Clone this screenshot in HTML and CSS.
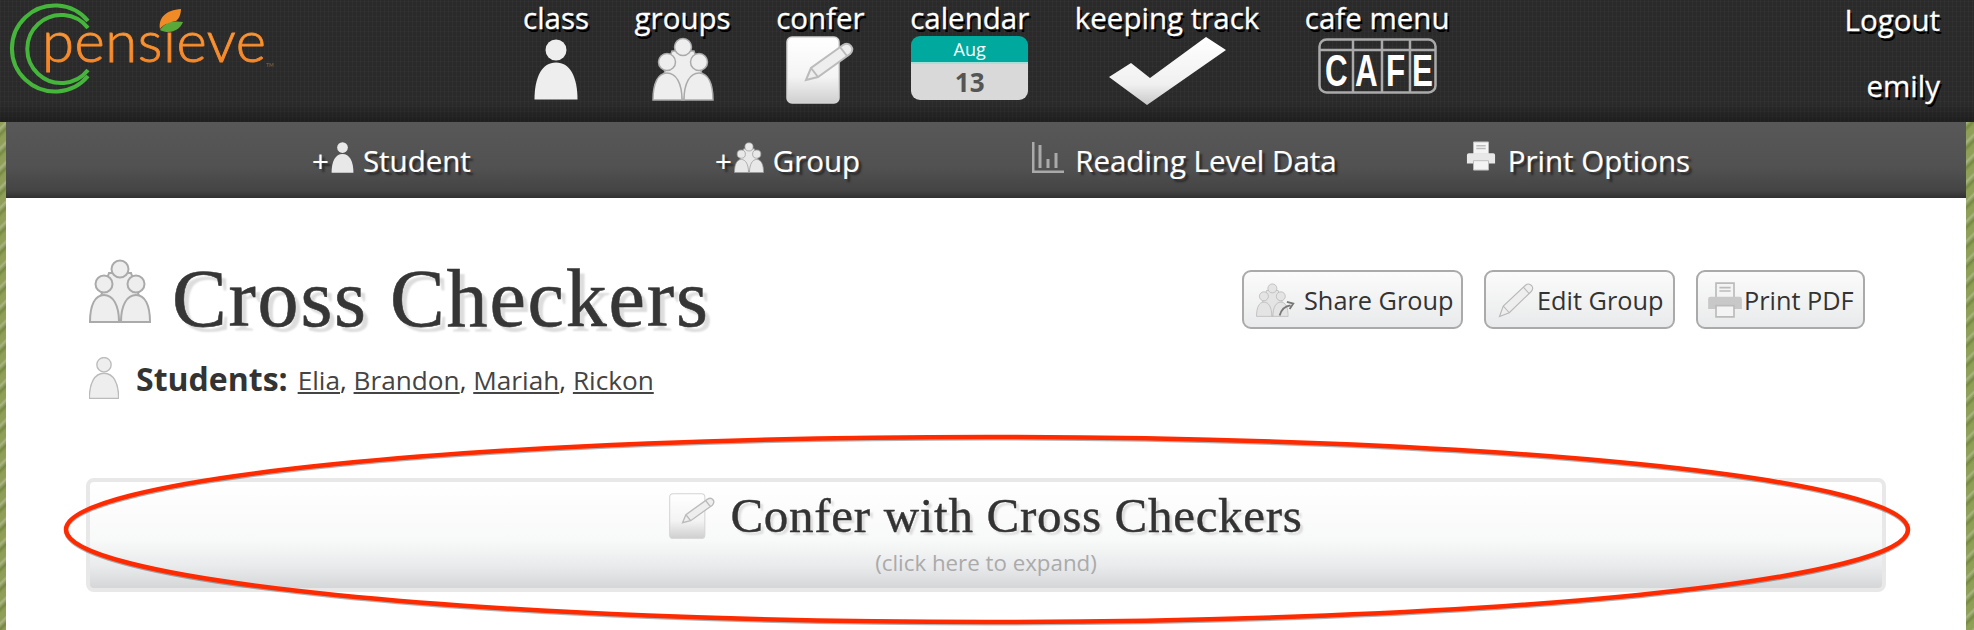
FILE: index.html
```html
<html>
    <head>
        <title>Pensieve - Cross Checkers</title>
        <link rel="stylesheet" href="styles.css">
    </head>
    <body>
        <svg class="defs">
            <defs>
                <symbol id="person" viewBox="0 0 44 61">
                    <circle cx="22" cy="11" r="10.5"/>
                    <path d="M0.5 60.5 C0.5 38 8 23.5 22 23.5 C36 23.5 43.5 38 43.5 60.5 Z"/>
                </symbol>
                <symbol id="group" viewBox="0 0 62 64">
                    <path d="M20 14 H42 L50 37 Q35 42 32 63 H30 Q27 42 12 37 Z"/>
                    <circle cx="31" cy="10" r="8.5"/>
                    <circle cx="15" cy="25" r="8.5"/>
                    <circle cx="47" cy="25" r="8.5"/>
                    <path d="M1 63 C1 46 6 36 15 36 C24 36 30 46 30 63 Z"/>
                    <path d="M32 63 C32 46 38 36 47 36 C56 36 61 46 61 63 Z"/>
                </symbol>
                <symbol id="printer" viewBox="0 0 32 32">
                    <path d="M8 1 H24 V14 H8 Z" fill="#f4f4f4" stroke="#bbb"/>
                    <path d="M11 5 H21 M11 8 H21" stroke="#bbb" stroke-width="1.500"/>
                    <path d="M3 13 H29 Q31 13 31 15 V24 H1 V15 Q1 13 3 13 Z"/>
                    <path d="M8 21 H24 V31 H8 Z" fill="#f4f4f4" stroke="#bbb"/>
                </symbol>
                <symbol id="pencil" viewBox="0 0 48 48">
                    <path d="M2 46 L7 32 L37 4 Q41 1 45 5 Q48 9 44 13 L15 41 Z M7 32 L15 41 M34 7 L42 16"/>
                </symbol>
                <symbol id="note" viewBox="0 0 68 68">
                    <rect x="1" y="1" width="52" height="66" rx="5" fill="url(#noteFill)" stroke="#d4d4d4" stroke-width="1.500"/>
                    <path class="note-pen" d="M20 44 L25 32 L57 9 Q62 6 65 10 Q68 14 64 18 L32 41 Z M25 32 L32 41 M54 11 L61 20"/>
                </symbol>
                <linearGradient id="noteFill" x1="0" y1="0" x2="0" y2="1">
                    <stop offset="0" stop-color="#fff"/>
                    <stop offset="0.6" stop-color="#f4f4f4"/>
                    <stop offset="1" stop-color="#cfcfcf"/>
                </linearGradient>
                <linearGradient id="checkFill" x1="0" y1="0" x2="0" y2="1">
                    <stop offset="0" stop-color="#fff"/>
                    <stop offset="0.7" stop-color="#f0f0f0"/>
                    <stop offset="1" stop-color="#c8c8c8"/>
                </linearGradient>
                <linearGradient id="logoFill" x1="0" y1="0" x2="0" y2="1">
                    <stop offset="0" stop-color="#ffb04a"/>
                    <stop offset="1" stop-color="#f47c20"/>
                </linearGradient>
            </defs>
        </svg>

        <div id="header">
            <svg class="logo" viewBox="0 0 280 98">
                <path class="ring" d="M88 21 A43 43 0 1 0 88 76"/>
                <path class="ring" d="M88 28 A34 34 0 1 0 88 70"/>
                <text class="logo-text" x="42" y="62" textLength="224" lengthAdjust="spacing">pensieve</text>
                <text class="logo-tm" x="266" y="67">TM</text>
                <path d="M160 29 C158 18 166 10 181 9 C181 14 179 19 176 21 C170 22 164 24 160 29 Z" fill="#ef8a26"/>
                <path d="M160 30 C164 23 172 20 183 22 C180 30 170 35 160 30 Z" fill="#5aa83a"/>
            </svg>

            <div class="nav">
                <a class="nav-item">class
                    <svg class="nav-icon person-icon"><use href="#person"/></svg>
                </a>
                <a class="nav-item">groups
                    <svg class="nav-icon group-icon"><use href="#group"/></svg>
                </a>
                <a class="nav-item">confer
                    <svg class="nav-icon note-icon"><use href="#note"/></svg>
                </a>
                <a class="nav-item">calendar
                    <div class="cal">
                        <div class="cal-month">Aug</div>
                        <div class="cal-day">13</div>
                    </div>
                </a>
                <a class="nav-item">keeping track
                    <svg class="nav-icon check-icon" viewBox="0 0 117 68"><path d="M0 40 L22 26 L41 41 L97 0 L117 13 L38 68 Z" fill="url(#checkFill)"/></svg>
                </a>
                <a class="nav-item">cafe menu
                    <svg class="nav-icon cafe-icon" viewBox="0 0 119 56">
                        <rect x="1.500" y="1.500" width="116" height="53" rx="7"/>
                        <path d="M1.500 12 H117.500 M35 1.500 V54.500 M64 1.500 V54.500 M92 1.500 V54.500"/>
                        <text transform="translate(7 48) scale(0.95 1.33)">C</text>
                        <text transform="translate(37 48) scale(0.95 1.33)">A</text>
                        <text transform="translate(68 48) scale(0.95 1.33)">F</text>
                        <text transform="translate(94 48) scale(0.95 1.33)">E</text>
                    </svg>
                </a>
            </div>

            <div class="user">
                <a>Logout</a>
                <a>emily</a>
            </div>
        </div>

        <div id="page">
            <div id="subnav">
                <a class="sub-item sub-student">+<svg class="sub-icon person-small"><use href="#person"/></svg> Student</a>
                <a class="sub-item sub-group">+<svg class="sub-icon group-small"><use href="#group"/></svg> Group</a>
                <a class="sub-item sub-data">
                    <svg class="sub-icon data-small" viewBox="0 0 32 32"><path d="M1 1 V31 H32 M8 4 V27 M16 18 V27 M24 12 V27" /></svg> Reading Level Data</a>
                <a class="sub-item sub-print"><svg class="sub-icon print-small"><use href="#printer"/></svg> Print Options</a>
            </div>

            <div id="content">
                <div class="title-row">
                    <div class="title-left">
                        <svg class="title-icon"><use href="#group"/></svg>
                        <h1>Cross Checkers</h1>
                    </div>
                    <div class="actions">
                        <button class="action share-btn">
                            <svg class="action-icon" viewBox="0 0 44 46">
                                <use href="#group" width="36" height="44" y="1"/>
                                <path class="share-arrow" d="M26 40 Q29 30 38 29 M34 25 L41 27 L37 33"/>
                            </svg>Share Group
                        </button>
                        <button class="action edit-btn">
                            <svg class="action-icon"><use href="#pencil"/></svg>Edit Group
                        </button>
                        <button class="action print-btn">
                            <svg class="action-icon"><use href="#printer"/></svg>Print PDF
                        </button>
                    </div>
                </div>

                <div class="students">
                    <svg class="students-icon"><use href="#person"/></svg>
                    <b>Students:</b>
                    <span class="names"><a>Elia</a>, <a>Brandon</a>, <a>Mariah</a>, <a>Rickon</a></span>
                </div>

                <div class="confer">
                    <div class="confer-head">
                        <svg class="confer-icon"><use href="#note"/></svg>
                        <h2>Confer with Cross Checkers</h2>
                    </div>
                    <p>(click here to expand)</p>
                </div>
            </div>
        </div>

        <!-- hand drawn red circle on top of the screenshot -->
        <svg class="annotation" viewBox="0 0 1974 630">
            <ellipse class="mark-shadow" cx="987" cy="531" rx="921" ry="92.500"/>
            <ellipse class="mark" cx="987" cy="529.500" rx="921" ry="92.500"/>
        </svg>
    </body>
</html>
```

FILE: styles.css
```css
html, body {
    height: 630px;
    overflow: hidden;
}
body {
    margin: 0;
    position: relative;
    font-family: "Open Sans", "Noto Sans", sans-serif;
    background-color: #8a9a55;
    background-image: repeating-linear-gradient(135deg, #8f9f58 0, #8f9f58 5px, #a9b582 7px, #76883f 11px, #8f9f58 14px);
}
a {
    color: inherit;
}
.defs {
    position: absolute;
    width: 0;
    height: 0;
}

/* top bar */
#header {
    height: 122px;
    box-sizing: border-box;
    display: flex;
    align-items: flex-start;
    color: #fff;
    background-color: #2a2a2a;
    background-image:
        linear-gradient(to bottom, rgba(0,0,0,0) 85%, rgba(0,0,0,0.3) 100%),
        repeating-linear-gradient(90deg, rgba(255,255,255,0.025) 0, rgba(255,255,255,0.025) 1px, rgba(0,0,0,0) 1px, rgba(0,0,0,0) 4px),
        repeating-linear-gradient(0deg, rgba(255,255,255,0.02) 0, rgba(255,255,255,0.02) 1px, rgba(0,0,0,0) 1px, rgba(0,0,0,0) 5px);
    text-shadow: 2px 3px 0 #000;
}
.logo {
    width: 280px;
    height: 98px;
    flex: none;
}
.ring {
    fill: none;
    stroke: #45b53c;
    stroke-width: 4;
}
.logo-text {
    font-family: Lato, sans-serif;
    font-weight: 300;
    font-size: 58px;
    fill: url(#logoFill);
    stroke: #f58a2a;
    stroke-width: 0.9;
    text-shadow: none;
}
.logo-tm {
    font-family: Lato, sans-serif;
    font-size: 5px;
    fill: #8a6a3a;
    text-shadow: none;
}
.nav {
    display: flex;
    gap: 45.500px;
    margin-left: 243px;
}
.nav-item {
    display: flex;
    flex-direction: column;
    align-items: center;
    font-size: 29.500px;
    line-height: 36px;
    white-space: nowrap;
    -webkit-text-stroke: 0.3px #fff;
}
.nav-icon {
    display: block;
    fill: #eee;
}
.person-icon {
    width: 44px;
    height: 61px;
    margin-top: 3px;
}
.group-icon {
    width: 62px;
    height: 64px;
    margin-top: 1px;
    stroke: #aaa;
    stroke-width: 1.500;
}
.note-icon {
    width: 68px;
    height: 68px;
}
.note-pen {
    fill: #eee;
    stroke: #bbb;
    stroke-width: 2;
}
.cal {
    width: 117px;
    height: 64px;
    border-radius: 9px;
    overflow: hidden;
    text-shadow: none;
    text-align: center;
    -webkit-text-stroke: 0;
}
.cal-month {
    height: 26px;
    line-height: 26px;
    font-size: 18px;
    color: #fff;
    background-color: #00a99d;
    border-bottom: 2px solid #a5e0d8;
}
.cal-day {
    height: 36px;
    line-height: 37px;
    font-size: 26px;
    font-weight: 700;
    color: #555;
    background-color: #d9d9d9;
}
.check-icon {
    width: 117px;
    height: 68px;
    margin-top: 1px;
}
.cafe-icon {
    width: 119px;
    height: 56px;
    margin-top: 2px;
    fill: none;
    stroke: #aaa;
    stroke-width: 2.500;
}
.cafe-icon text {
    font-family: "Liberation Sans", sans-serif;
    font-weight: 700;
    font-size: 33px;
    fill: #fff;
    stroke: none;
    text-shadow: none;
    -webkit-text-stroke: 0;
}
.user {
    margin-left: auto;
    padding-right: 34px;
    display: flex;
    flex-direction: column;
    align-items: flex-end;
    gap: 30px;
    font-size: 29.500px;
    line-height: 36px;
    padding-top: 2px;
    -webkit-text-stroke: 0.3px #fff;
}

/* second bar and page */
#page {
    margin: 0 8px 0 6px;
    background-color: #fff;
    height: 508px;
}
#subnav {
    height: 76px;
    display: flex;
    align-items: center;
    color: #fff;
    background-image: linear-gradient(to bottom, #585858 0, #515151 60%, #444 90%, #303030 100%);
    text-shadow: 3px 3px 2px #2a2a2a;
    font-size: 29.500px;
    -webkit-text-stroke: 0.2px #fff;
}
.sub-item {
    display: flex;
    align-items: center;
    gap: 8px;
    white-space: nowrap;
}
.sub-student {
    margin-left: 306px;
}
.sub-group {
    margin-left: 244px;
}
.sub-data {
    margin-left: 172px;
    gap: 11px;
}
.sub-print {
    margin-left: 129px;
}
.sub-icon {
    flex: none;
    fill: #e8e8e8;
}
.person-small {
    width: 25px;
    height: 31px;
    margin-left: -7px;
    margin-top: -6px;
}
.group-small {
    width: 32px;
    height: 31px;
    margin-left: -7px;
    margin-top: -6px;
    stroke: #999;
    stroke-width: 1.500;
}
.data-small {
    width: 32px;
    height: 32px;
    margin-top: -6px;
    fill: none;
    stroke: #aaa;
    stroke-width: 3;
}
.print-small {
    width: 30px;
    height: 32px;
    margin-top: -8px;
    margin-right: 4px;
}
#content {
    padding: 0 80px;
    color: #363636;
}
.title-row {
    display: flex;
    justify-content: space-between;
    align-items: flex-start;
    height: 159px;
}
.title-left {
    display: flex;
    align-items: flex-start;
    gap: 21px;
    padding-top: 61px;
}
.title-icon {
    width: 62px;
    height: 64px;
    margin-left: 3px;
    fill: #eee;
    stroke: #aaa;
    stroke-width: 2;
}
h1 {
    margin: 0;
    font-family: "Liberation Serif", serif;
    font-weight: 400;
    font-size: 82px;
    line-height: 80px;
    text-shadow: 5px 5px 2px #ddd;
    letter-spacing: 1.800px;
    -webkit-text-stroke: 0.6px #363636;
}
.actions {
    display: flex;
    gap: 21px;
    padding-top: 72px;
    padding-right: 21px;
}
.action {
    height: 59px;
    box-sizing: border-box;
    display: flex;
    align-items: center;
    gap: 7px;
    border: 2px solid #aaa;
    border-radius: 9px;
    background-image: linear-gradient(to bottom, #fbfbfb, #e9eaeb);
    color: #333;
    font-family: "Open Sans", sans-serif;
    font-size: 25.300px;
    padding: 0 8px 0 12px;
    white-space: nowrap;
}
.share-btn {
    width: 221px;
    gap: 8px;
}
.edit-btn {
    width: 191px;
    gap: 3px;
}
.print-btn {
    width: 169px;
    gap: 1px;
    padding-left: 9px;
}
.action-icon {
    width: 36px;
    height: 42px;
    flex: none;
    fill: #e4e4e4;
    stroke: #b8b8b8;
    stroke-width: 1.500;
}
.share-btn .action-icon {
    width: 40px;
}
.share-arrow {
    fill: none;
    stroke: #777;
    stroke-width: 2;
}
.edit-btn .action-icon {
    fill: #eee;
}
.print-btn .action-icon {
    fill: #c8c8c8;
    stroke: none;
}
.students {
    display: flex;
    align-items: center;
    gap: 17px;
    height: 42px;
    margin-left: 3px;
    font-size: 32px;
}
.students-icon {
    width: 30px;
    height: 42px;
    fill: #eee;
    stroke: #bbb;
    stroke-width: 2;
}
.students b {
    font-weight: 700;
    color: #333;
}
.names {
    font-size: 26.200px;
    margin-left: -7px;
    padding-top: 4px;
}
.names a {
    color: #444;
    text-decoration: underline;
}
.confer {
    margin-top: 79px;
    height: 114px;
    box-sizing: border-box;
    border: 4px solid #e8e8e8;
    border-radius: 8px;
    background-image: linear-gradient(to bottom, #fff 0, #fcfcfc 25%, #f8f9f9 55%, #e9eaeb 80%, #d5d6d8 100%);
    text-align: center;
}
.confer-head {
    display: flex;
    justify-content: center;
    align-items: center;
    gap: 15px;
    padding-top: 9px;
    height: 50px;
}
.confer-icon {
    width: 46px;
    height: 46px;
}
h2 {
    margin: 0;
    font-family: "Liberation Serif", serif;
    font-weight: 400;
    font-size: 49px;
    line-height: 50px;
    letter-spacing: 0.700px;
    color: #333;
    text-shadow: 3px 3px 2px #ddd;
    -webkit-text-stroke: 0.4px #333;
}
.confer p {
    margin: 8px 0 0 0;
    font-size: 22.300px;
    line-height: 28px;
    color: #aaa;
}

/* red marker */
.annotation {
    position: absolute;
    left: 0;
    top: 0;
    width: 1974px;
    height: 630px;
    pointer-events: none;
}
.annotation ellipse {
    fill: none;
}
.mark {
    stroke: #ff2a00;
    stroke-width: 4.500;
}
.mark-shadow {
    stroke: rgba(0,0,0,0.3);
    stroke-width: 4;
}
```
